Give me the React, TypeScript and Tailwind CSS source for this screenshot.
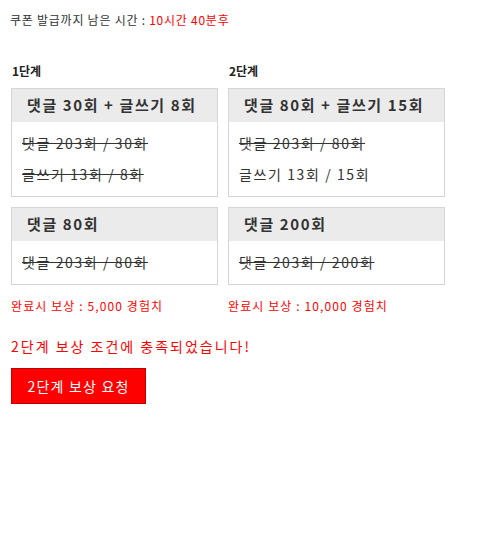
export default function App() {
  const font = { fontFamily: '"Noto Sans CJK KR", "Noto Sans", sans-serif' };
  const stages = [
    {
      label: '1단계',
      width: 'w-[207px]',
      reward: '5,000',
      cards: [
        {
          title: '댓글 30회 + 글쓰기 8회',
          rows: [
            { text: '댓글 203회 / 30회', done: true },
            { text: '글쓰기 13회 / 8회', done: true },
          ],
        },
        { title: '댓글 80회', rows: [{ text: '댓글 203회 / 80회', done: true }] },
      ],
    },
    {
      label: '2단계',
      width: 'w-[217px]',
      reward: '10,000',
      cards: [
        {
          title: '댓글 80회 + 글쓰기 15회',
          rows: [
            { text: '댓글 203회 / 80회', done: true },
            { text: '글쓰기 13회 / 15회', done: false },
          ],
        },
        { title: '댓글 200회', rows: [{ text: '댓글 203회 / 200회', done: true }] },
      ],
    },
  ];

  return (
    <div className="min-h-screen bg-white text-[#333] pl-[10px] pt-[11px]" style={font}>
      <p className="text-[12px] leading-[18px] tracking-[0.75px]">
        쿠폰 발급까지 남은 시간 : <span className="text-[#ff0000]">10시간 40분후</span>
      </p>

      <div className="flex gap-[10px] mt-[34px] pl-[1px]">
        {stages.map((s) => (
          <div key={s.label} className={s.width}>
            <h3 className="text-[12px] font-bold leading-[16px] pl-[1px] text-[#222]">{s.label}</h3>
            <div className="mt-[9px] flex flex-col gap-[10px]">
              {s.cards.map((c) => (
                <div key={c.title} className="border border-[#d6d6d6]">
                  <div className="h-[33px] bg-[#ebebeb] flex items-center pl-[15px] text-[15px] font-bold tracking-[1.6px] text-[#333] whitespace-nowrap">
                    {c.title}
                  </div>
                  <div className="py-[6px] pl-[10px]">
                    {c.rows.map((r) => (
                      <div
                        key={r.text}
                        className={`h-[31px] flex items-center text-[14px] tracking-[1.6px] text-[#333] ${r.done ? 'line-through' : ''}`}
                      >
                        {r.text}
                      </div>
                    ))}
                  </div>
                </div>
              ))}
            </div>
            <p className="mt-[12px] text-[12px] leading-[18px] tracking-[1.1px] text-[#ff0000] whitespace-nowrap">
              완료시 보상 : {s.reward} 경험치
            </p>
          </div>
        ))}
      </div>

      <p className="mt-[21px] pl-[1px] text-[14px] leading-[20px] tracking-[2px] text-[#ff0000]">
        2단계 보상 조건에 충족되었습니다!
      </p>
      <button className="mt-[12px] ml-[1px] w-[135px] h-[36px] bg-[#ff0000] border border-[#c00000] text-white text-[14px] tracking-[1.2px]">
        2단계 보상 요청
      </button>
    </div>
  );
}
